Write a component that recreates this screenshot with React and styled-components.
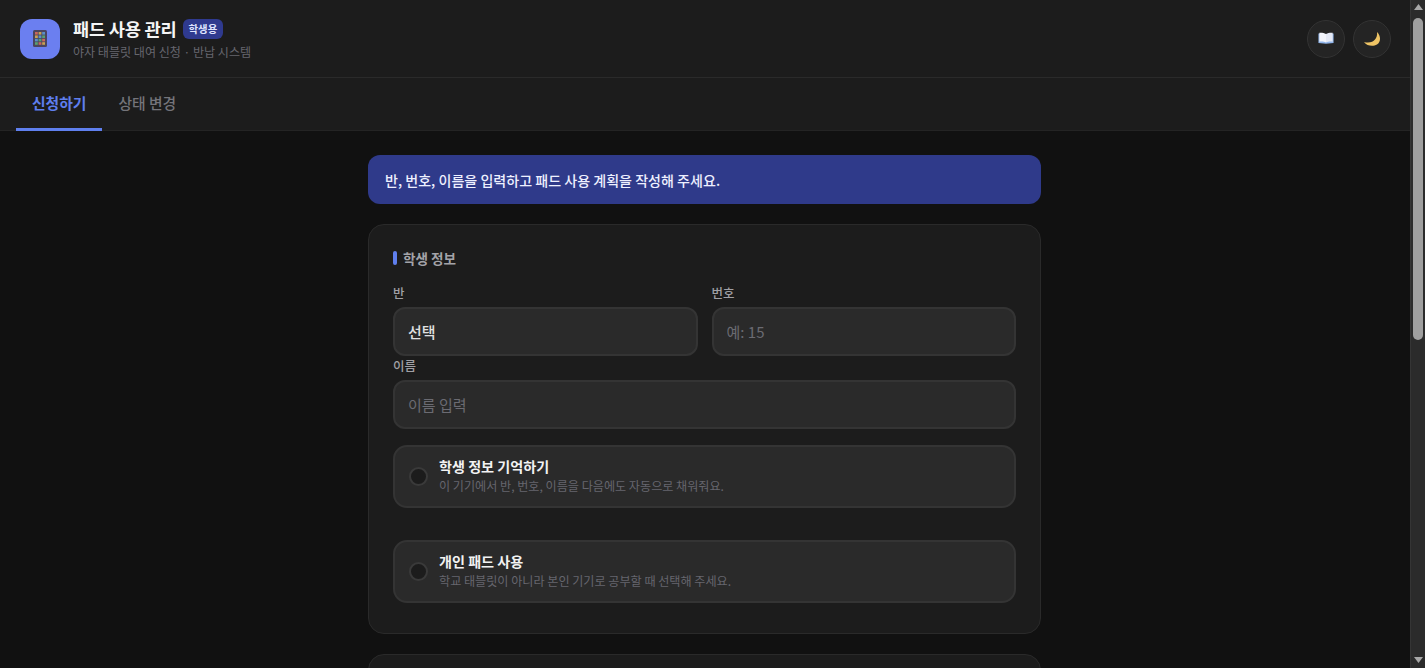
import React from "react";
import styled, { createGlobalStyle } from "styled-components";

const Global = createGlobalStyle`
  html, body { margin: 0; padding: 0; background: #111111; }
  body { font-family: "Noto Sans CJK KR", "Noto Sans", sans-serif; color: #f1f1f3; }
  * { box-sizing: border-box; }
  input::placeholder { color: #6b6b72; opacity: 1; }
`;

const Shell = styled.div`
  display: flex;
  height: 100vh;
  overflow: hidden;
`;
const Page = styled.div`
  flex: 1;
  min-width: 0;
  overflow-y: auto;
  scrollbar-width: none;
`;
const Rail = styled.div`
  width: 15px;
  flex: none;
  background: #2b2b2b;
  border-left: 1px solid #353535;
  display: flex;
  flex-direction: column;
  align-items: center;
`;
const RailArrow = styled.svg`
  flex: none;
  width: 9px;
  height: 6px;
  margin: ${p => p.$margin};
  fill: #a8a8a8;
`;
const Thumb = styled.div`
  width: 10px;
  height: 322px;
  margin-top: 8px;
  border-radius: 5px;
  background: #9f9f9f;
`;
const RailSpace = styled.div`
  flex: 1;
`;

const Header = styled.header`
  height: 78px;
  background: #1c1c1c;
  border-bottom: 1px solid #2a2a2a;
  display: flex;
  align-items: center;
  justify-content: space-between;
  padding: 0 19px 0 20px;
`;
const Brand = styled.div`
  display: flex;
  align-items: center;
  gap: 13px;
`;
const Logo = styled.div`
  width: 40px;
  height: 40px;
  border-radius: 12px;
  background: #6b7ff0;
  display: flex;
  align-items: center;
  justify-content: center;
`;
const TitleRow = styled.div`
  display: flex;
  align-items: center;
  gap: 6px;
  height: 22px;
`;
const Title = styled.h1`
  margin: 0;
  font-size: 17.6px;
  font-weight: 700;
  letter-spacing: -0.2px;
  color: #f5f5f5;
`;
const Badge = styled.span`
  background: #2f3a8f;
  color: #dfe3ff;
  font-size: 10.4px;
  font-weight: 700;
  padding: 2px 6px;
  line-height: 16px;
  border-radius: 6px;
`;
const Subtitle = styled.div`
  font-size: 12.05px;
  color: #66666e;
  margin-top: 3px;
  line-height: 17px;
`;
const Actions = styled.div`
  display: flex;
  gap: 8px;
`;
const RoundButton = styled.button`
  width: 38px;
  height: 38px;
  border-radius: 50%;
  border: 1px solid #333;
  background: #242424;
  padding: 0;
  display: flex;
  align-items: center;
  justify-content: center;
`;
const Tabs = styled.nav`
  height: 53px;
  background: #1c1c1c;
  border-bottom: 1px solid #242424;
  display: flex;
  padding-left: 16px;
`;
const Tab = styled.div`
  height: 53px;
  padding: 0 16px 2px;
  display: flex;
  align-items: center;
  font-size: 14.8px;
  font-weight: ${p => (p.$active ? 700 : 500)};
  color: ${p => (p.$active ? "#5f7fee" : "#74747a")};
  border-bottom: 3px solid ${p => (p.$active ? "#5f7fee" : "transparent")};
`;
const Main = styled.main`
  width: 674px;
  margin: 0 auto;
  padding: 24px 1px 40px 0;
  display: flex;
  flex-direction: column;
  gap: 20px;
`;
const Notice = styled.div`
  height: 49px;
  background: #2f3a8a;
  border-radius: 12px;
  padding: 0 17px;
  display: flex;
  align-items: center;
  font-size: 14.05px;
  font-weight: 500;
  color: #eef0ff;
`;
const Card = styled.section`
  background: #1c1c1c;
  border: 1px solid #2a2a2a;
  border-radius: 16px;
  padding: 23px 24px 30px;
  min-height: ${p => p.$min || 0}px;
`;
const CardHead = styled.h2`
  margin: 0 0 16px;
  font-size: 13.6px;
  font-weight: 700;
  color: #a3a3a8;
  line-height: 20px;
  display: flex;
  align-items: center;
  gap: 6px;
  &::before {
    content: "";
    width: 4px;
    height: 14px;
    border-radius: 2px;
    background: #5f7fee;
  }
`;
const Grid = styled.div`
  display: grid;
  grid-template-columns: 1fr 1fr;
  gap: 0 14px;
  margin-bottom: 1px;
`;
const Field = styled.div`
  display: flex;
  flex-direction: column;
`;
const Label = styled.label`
  font-size: 12.5px;
  font-weight: 500;
  color: #a0a0a5;
  line-height: 17px;
  margin-bottom: 6px;
`;
const InputBox = styled.input`
  width: 100%;
  height: 49px;
  background: #2a2a2a;
  border: 2px solid #343434;
  border-radius: 12px;
  padding: 0 13px;
  font: 400 15px "Noto Sans CJK KR", sans-serif;
  color: #f1f1f3;
  outline: none;
`;
const SelectBox = styled.div`
  height: 49px;
  background: #2a2a2a;
  border: 2px solid #343434;
  border-radius: 12px;
  padding: 0 13px;
  display: flex;
  align-items: center;
  font-size: 15px;
  font-weight: 500;
  color: #e0e0e0;
`;
const Toggle = styled.div`
  height: 63px;
  margin-top: ${p => p.$mt}px;
  background: #2a2a2a;
  border: 2px solid #343434;
  border-radius: 14px;
  padding: 0 14px;
  display: flex;
  align-items: center;
  gap: 11px;
`;
const Radio = styled.span`
  width: 19px;
  height: 19px;
  border-radius: 50%;
  background: #1c1c1c;
  border: 2px solid #3a3a3a;
  flex: none;
`;
const ToggleText = styled.div`
  padding-bottom: 3px;
`;
const ToggleTitle = styled.div`
  font-size: 14.1px;
  font-weight: 700;
  color: #f2f2f2;
  line-height: 20px;
`;
const ToggleSub = styled.div`
  font-size: 12.1px;
  color: #66666e;
  line-height: 17px;
  margin-top: 1px;
`;

const TabletIcon = () => (
  <svg width="14" height="17" viewBox="0 0 14 17">
    <rect x="0" y="0" width="14" height="17" rx="1.5" fill="#4a4560" />
    {[0, 1, 2, 3].map(r =>
      [0, 1, 2].map(c => (
        <rect
          key={`${r}${c}`}
          x={2 + c * 3.6}
          y={2 + r * 3.4}
          width="2.8"
          height="2.6"
          fill={["#c9675c", "#c9a24f", "#5a8fc9", "#58a070"][(r + c) % 4]}
        />
      ))
    )}
  </svg>
);
const BookIcon = () => (
  <svg width="16" height="13" viewBox="0 0 18 14">
    <path d="M0.5 1.5 L9 2.5 L17.5 1.5 V12 L9 13 L0.5 12 Z" fill="#8fb4ea" />
    <path d="M1.5 0.5 C4 0.3 7 0.6 9 1.8 V11.5 C7 10.5 4 10.3 1.5 10.6 Z" fill="#f2f4fa" />
    <path d="M16.5 0.5 C14 0.3 11 0.6 9 1.8 V11.5 C11 10.5 14 10.3 16.5 10.6 Z" fill="#e4e8f4" />
  </svg>
);
const MoonIcon = () => (
  <svg width="18" height="18" viewBox="0 0 18 18">
    <path d="M14 2 C18 6 18 12 14 14.5 C10 17 4 16 1 12 C6 13.5 10 12 12 9.5 C13.5 7.5 14.5 5 14 2 Z" fill="#efc465" />
  </svg>
);

export default function App() {
  return (
    <>
      <Global />
      <Shell>
        <Page>
          <Header>
            <Brand>
              <Logo><TabletIcon /></Logo>
              <div>
                <TitleRow>
                  <Title>패드 사용 관리</Title>
                  <Badge>학생용</Badge>
                </TitleRow>
                <Subtitle>야자 태블릿 대여 신청 · 반납 시스템</Subtitle>
              </div>
            </Brand>
            <Actions>
              <RoundButton aria-label="안내"><BookIcon /></RoundButton>
              <RoundButton aria-label="테마"><MoonIcon /></RoundButton>
            </Actions>
          </Header>
          <Tabs>
            <Tab $active>신청하기</Tab>
            <Tab>상태 변경</Tab>
          </Tabs>
          <Main>
            <Notice>반, 번호, 이름을 입력하고 패드 사용 계획을 작성해 주세요.</Notice>
            <Card>
              <CardHead>학생 정보</CardHead>
              <Grid>
                <Field>
                  <Label>반</Label>
                  <SelectBox>선택</SelectBox>
                </Field>
                <Field>
                  <Label>번호</Label>
                  <InputBox placeholder="예: 15" />
                </Field>
              </Grid>
              <Field>
                <Label>이름</Label>
                <InputBox placeholder="이름 입력" />
              </Field>
              <Toggle $mt={16}>
                <Radio />
                <ToggleText>
                  <ToggleTitle>학생 정보 기억하기</ToggleTitle>
                  <ToggleSub>이 기기에서 반, 번호, 이름을 다음에도 자동으로 채워줘요.</ToggleSub>
                </ToggleText>
              </Toggle>
              <Toggle $mt={32}>
                <Radio />
                <ToggleText>
                  <ToggleTitle>개인 패드 사용</ToggleTitle>
                  <ToggleSub>학교 태블릿이 아니라 본인 기기로 공부할 때 선택해 주세요.</ToggleSub>
                </ToggleText>
              </Toggle>
            </Card>
            <Card $min={630} />
          </Main>
        </Page>
        <Rail aria-hidden="true">
          <RailArrow $margin="4px 0 0" viewBox="0 0 9 6"><path d="M4.5 0L9 6H0z" /></RailArrow>
          <Thumb />
          <RailSpace />
          <RailArrow $margin="0 0 5px" viewBox="0 0 9 6"><path d="M0 0H9L4.5 6z" /></RailArrow>
        </Rail>
      </Shell>
    </>
  );
}
